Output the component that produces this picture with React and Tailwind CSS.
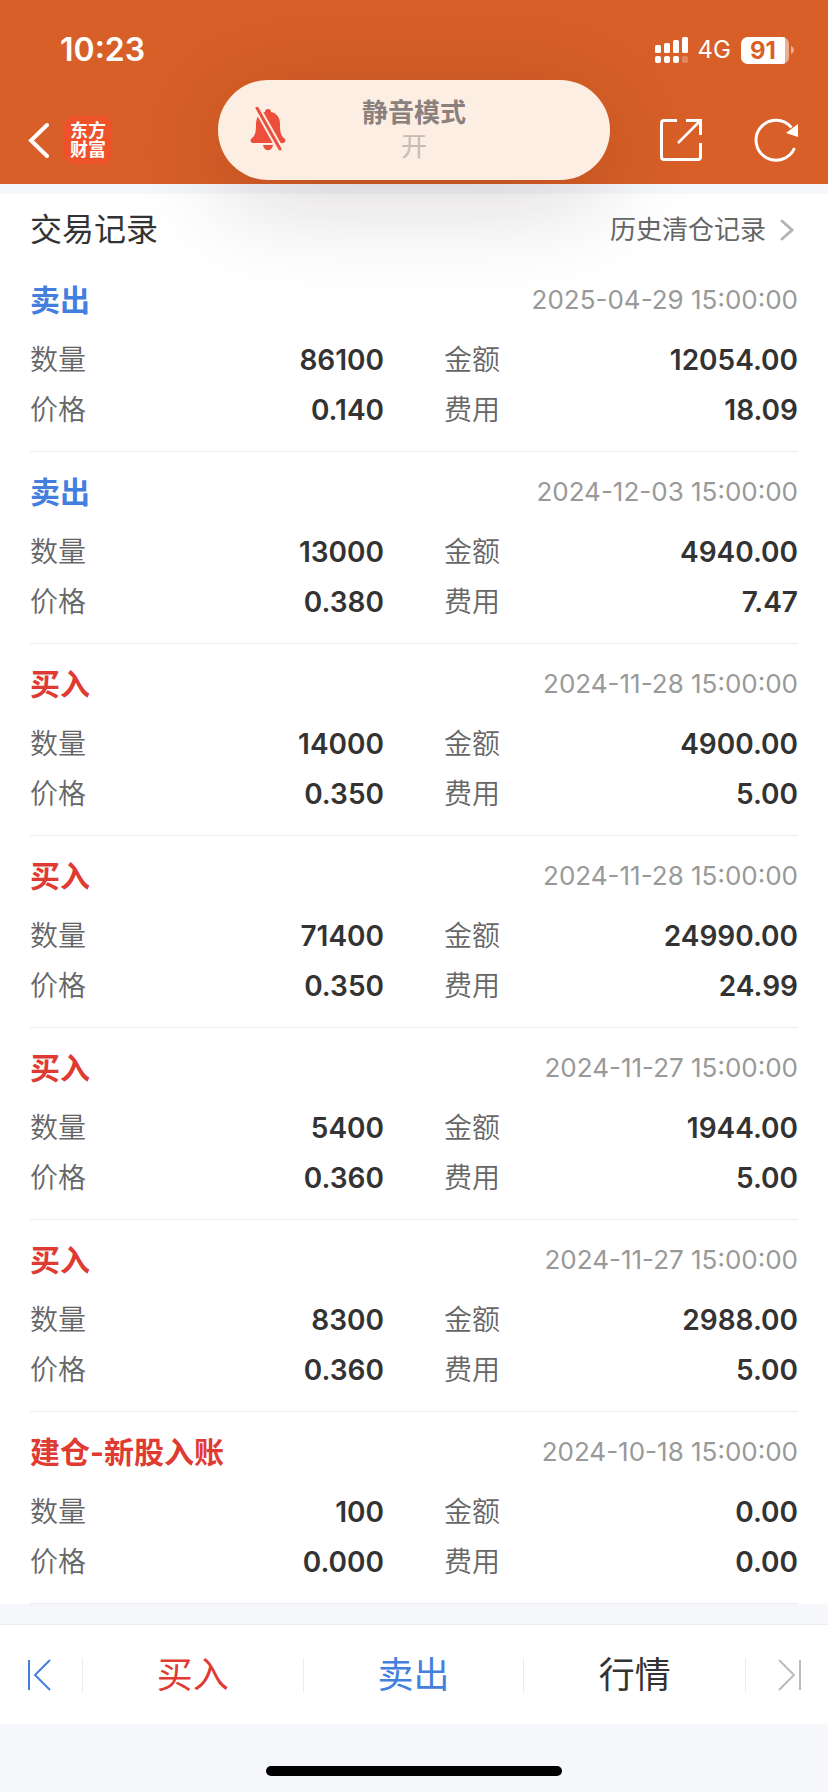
import React from 'react';

const records = [
    { id: 1, side: 'sell', title: '卖出', time: '2025-04-29 15:00:00', quantity: '86100', amount: '12054.00', price: '0.140', fee: '18.09' },
    { id: 2, side: 'sell', title: '卖出', time: '2024-12-03 15:00:00', quantity: '13000', amount: '4940.00', price: '0.380', fee: '7.47' },
    { id: 3, side: 'buy', title: '买入', time: '2024-11-28 15:00:00', quantity: '14000', amount: '4900.00', price: '0.350', fee: '5.00' },
    { id: 4, side: 'buy', title: '买入', time: '2024-11-28 15:00:00', quantity: '71400', amount: '24990.00', price: '0.350', fee: '24.99' },
    { id: 5, side: 'buy', title: '买入', time: '2024-11-27 15:00:00', quantity: '5400', amount: '1944.00', price: '0.360', fee: '5.00' },
    { id: 6, side: 'buy', title: '买入', time: '2024-11-27 15:00:00', quantity: '8300', amount: '2988.00', price: '0.360', fee: '5.00' },
    { id: 7, side: 'buy', title: '建仓-新股入账', time: '2024-10-18 15:00:00', quantity: '100', amount: '0.00', price: '0.000', fee: '0.00' },
];

const SignalIcon = () => (
    <svg width="33" height="26" viewBox="0 0 33 26" fill="white" aria-hidden="true">
        <rect x="0" y="8" width="6" height="8" rx="1.5" />
        <rect x="9" y="6" width="6" height="10" rx="1.5" />
        <rect x="18" y="3" width="6" height="13" rx="1.5" />
        <rect x="27" y="0" width="6" height="16" rx="1.5" />
        <rect x="0" y="19" width="6" height="7" rx="2" />
        <rect x="9" y="19" width="6" height="7" rx="2" />
        <rect x="18" y="19" width="6" height="7" rx="2" />
        <rect x="27" y="19" width="6" height="7" rx="2" opacity="0.25" />
    </svg>
);

const Battery = ({ level }) => (
    <div className="flex items-center gap-0.5">
        <div className="flex h-[27px] w-12 overflow-hidden rounded-[7px] bg-white/50">
            <span className="w-11 bg-white text-center text-2xl leading-[27px] font-bold text-[#d85f27]">{level}</span>
        </div>
        <svg width="3" height="8" viewBox="0 0 3 8" aria-hidden="true">
            <path d="M0 0C2 1 3 2.500 3 4C3 5.500 2 7 0 8Z" fill="white" opacity="0.5" />
        </svg>
    </div>
);

const StatusBar = () => (
    <div className="flex h-[100px] items-center justify-between pr-[34px] pl-[60px]">
        <span className="text-[32px] leading-10 font-semibold">10:23</span>
        <div className="flex items-center gap-2.5">
            <SignalIcon />
            <span className="text-2xl leading-7">4G</span>
            <Battery level="91" />
        </div>
    </div>
);

const BellOffIcon = () => (
    <svg width="36" height="44" viewBox="0 0 36 44" aria-hidden="true">
        <path
            d="M18 2C20 2 21 3 21 5C27 6 30 11 30 17C30 26 31 29 35 32C36 34 35 36 33 36H3C1 36 0 34 1 32C5 29 6 26 6 17C6 11 9 6 15 5C15 3 16 2 18 2Z"
            fill="#ed4f3d"
        />
        <path d="M13 38H23C22 45 14 45 13 38Z" fill="#ed4f3d" />
        <path d="M7 1L30 42" stroke="#fceee2" strokeWidth="7" />
        <path d="M7 1L30 42" stroke="#ed4f3d" strokeWidth="3" strokeLinecap="round" />
    </svg>
);

// Floats above both the header and the list, so its shadow falls on both
const SilentModeBanner = () => (
    <div
        role="status"
        className="absolute top-20 left-1/2 z-10 flex h-[100px] w-[392px] -translate-x-1/2 items-center justify-center rounded-full bg-[#fceee2] shadow-[0_20px_100px_rgba(30,0,0,0.17)]"
    >
        <div className="absolute top-[27px] left-8">
            <BellOffIcon />
        </div>
        <div className="text-center text-[26px] leading-[34px]">
            <p className="font-bold text-[#8a817e]">静音模式</p>
            <p className="text-[#c8bbb3]">开</p>
        </div>
    </div>
);

const NavBar = () => (
    <nav className="flex h-20 items-center justify-between pr-[30px] pl-[26px]">
        <div className="flex items-center gap-[15px]">
            <button type="button" aria-label="返回">
                <svg width="23" height="36" viewBox="0 0 23 36" fill="none" stroke="white" strokeWidth="4" aria-hidden="true">
                    <path d="M21 3L5 18.500L21 34" strokeLinecap="round" />
                </svg>
            </button>
            <div className="flex h-12 w-12 flex-col items-center justify-center rounded-[10px] bg-[#ee5229] text-[18px] leading-[19px] font-bold">
                <span>东方</span>
                <span>财富</span>
            </div>
        </div>
        <div className="flex items-center gap-[51px]">
            <button type="button" aria-label="分享">
                <svg width="44" height="44" viewBox="0 0 44 44" fill="none" stroke="white" strokeWidth="3" aria-hidden="true">
                    <path d="M18 2.500H5Q2.500 2.500 2.500 5V39Q2.500 41.500 5 41.500H39Q41.500 41.500 41.500 39V25" />
                    <path d="M27 2.500H41.500V17" />
                    <path d="M41 3L19 25" strokeWidth="2.500" />
                </svg>
            </button>
            <button type="button" aria-label="刷新">
                <svg width="44" height="44" viewBox="0 0 44 44" aria-hidden="true">
                    <path d="M40.500 30A20 20 0 1 1 37.500 9.500" fill="none" stroke="white" strokeWidth="3" />
                    <path d="M44 6V19L32 15Z" fill="white" />
                </svg>
            </button>
        </div>
    </nav>
);

const Field = ({ label, value }) => (
    <div className="flex items-center justify-between">
        <dt className="font-[350] text-[#666]">{label}</dt>
        <dd className="font-semibold text-[#333]">{value}</dd>
    </div>
);

const RecordItem = ({ record }) => (
    <li className="border-b border-[#ebecef] pt-5 pb-4">
        <div className="flex h-10 items-center justify-between">
            <h2 className={`text-[30px] leading-10 font-bold ${record.side === 'sell' ? 'text-[#447fe0]' : 'text-[#df3b33]'}`}>
                {record.title}
            </h2>
            <time className="text-[26px] leading-10 text-[#999]">{record.time}</time>
        </div>
        <dl className="mt-[15px] grid grid-cols-2 gap-x-[60px] text-[28px] leading-[50px]">
            <Field label="数量" value={record.quantity} />
            <Field label="金额" value={record.amount} />
            <Field label="价格" value={record.price} />
            <Field label="费用" value={record.fee} />
        </dl>
    </li>
);

const TabBar = () => (
    <div className="flex h-[100px] items-center border-t border-[#ebecef] bg-white text-[36px]">
        <button type="button" aria-label="上一个" className="flex w-[82px] justify-center pr-1">
            <svg width="23" height="32" viewBox="0 0 23 32" fill="none" stroke="#447fe0" aria-hidden="true">
                <path d="M1 1V31" strokeWidth="2" />
                <path d="M22 1L7 16L22 31" strokeWidth="2" />
            </svg>
        </button>
        <div className="grid flex-1 grid-cols-3 divide-x divide-[#ebecef] border-x border-[#ebecef] leading-[34px]">
            <button type="button" className="text-[#df3b33]">买入</button>
            <button type="button" className="text-[#447fe0]">卖出</button>
            <button type="button" className="text-[#333]">行情</button>
        </div>
        <button type="button" aria-label="下一个" className="flex w-[82px] justify-center pl-1">
            <svg width="23" height="32" viewBox="0 0 23 32" fill="none" stroke="#bbb" aria-hidden="true">
                <path d="M22 1V31" strokeWidth="2" />
                <path d="M1 1L16 16L1 31" strokeWidth="2" />
            </svg>
        </button>
    </div>
);

const App = () => {
    return (
        <div className="relative flex min-h-screen flex-col overflow-hidden bg-[#f6f7fa] font-['Inter','Noto_Sans_CJK_SC',sans-serif]">
            <header className="bg-[#d85f27] pb-1 text-white">
                <StatusBar />
                <NavBar />
            </header>
            <SilentModeBanner />

            <main className="mt-2.5 bg-white px-[30px]">
                <div className="flex h-[66px] items-center justify-between pt-1.5">
                    <h1 className="text-[32px] leading-10 text-[#333]">交易记录</h1>
                    <a href="#history" className="flex items-center gap-[14px] pr-1 text-[26px] leading-10 text-[#666]">
                        历史清仓记录
                        <svg width="14" height="22" viewBox="0 0 14 22" fill="none" stroke="#b5b5b5" strokeWidth="3" aria-hidden="true">
                            <path d="M2 2L12 11L2 20" strokeLinecap="round" />
                        </svg>
                    </a>
                </div>
                <ul>
                    {records.map((record) => (
                        <RecordItem key={record.id} record={record} />
                    ))}
                </ul>
            </main>

            <footer className="mt-5">
                <TabBar />
                <div className="flex justify-center pt-[42px] pb-4">
                    <div className="h-2.5 w-[296px] rounded-full bg-black" />
                </div>
            </footer>
        </div>
    );
};

export default App;
